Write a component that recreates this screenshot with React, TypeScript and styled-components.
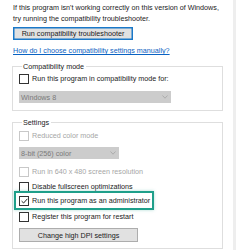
import type { FC, ReactNode } from 'react'
import styled, { createGlobalStyle } from 'styled-components'

const GlobalStyle = createGlobalStyle`
  html, body {
    margin: 0;
    padding: 0;
    background: #ffffff;
  }
  body {
    font-family: "Liberation Sans", Arial, sans-serif;
    font-size: 7.2px;
    color: #1b1b1b;
  }
`

// ─── Layout ────────────────────────────────────────────────────────────────────

const Window = styled.div`
  width: 250px;
  height: 250px;
  overflow: hidden;
  display: flex;
  background: #ffffff;
`

const Page = styled.div`
  width: 233px;
  flex-shrink: 0;
  padding: 2px 0 0 13px;
  box-sizing: border-box;
  display: flex;
  flex-direction: column;
`

const Divider = styled.div`
  width: 3px;
  flex-shrink: 0;
  background: #eeeeee;
`

const Intro = styled.p`
  margin: 0;
  line-height: 11px;
`

const PushButton = styled.button<{ $focused?: boolean; $width: number; $gap: number }>`
  width: ${({ $width }) => $width}px;
  height: ${({ $focused }) => ($focused ? 13 : 14)}px;
  margin-top: ${({ $gap }) => $gap}px;
  padding: 0;
  font-family: inherit;
  font-size: 7.2px;
  color: #1b1b1b;
  background: #e1e1e1;
  border: 1px solid ${({ $focused }) => ($focused ? '#1a78c8' : '#adadad')};
  box-shadow: ${({ $focused }) => ($focused ? 'inset 0 0 0 0.5px #1a78c8' : 'none')};
  border-radius: 0;
  flex-shrink: 0;
`

const HelpLink = styled.a`
  margin-top: 5px;
  line-height: 11px;
  color: #0a62c2;
  text-decoration: underline;
  width: fit-content;
`

const Group = styled.fieldset<{ $top: number; $bottom: number }>`
  margin: ${({ $top }) => $top}px 0 0 -1px;
  width: 211px;
  box-sizing: border-box;
  padding: 0 0 ${({ $bottom }) => $bottom}px 6px;
  border: 1px solid #dedede;
  display: flex;
  flex-direction: column;
  min-width: 0;
`

const Legend = styled.legend`
  margin-left: 3px;
  padding: 0 2px 0 1px;
  line-height: 11px;
  color: #1b1b1b;
`

const Row = styled.label<{ $gap: number; $disabled?: boolean; $highlight?: boolean }>`
  display: flex;
  align-items: center;
  gap: 3px;
  height: 11px;
  margin-top: ${({ $gap }) => $gap}px;
  color: ${({ $disabled }) => ($disabled ? '#a6a6a6' : '#1b1b1b')};
  width: fit-content;
  ${({ $highlight }) =>
    $highlight &&
    `
    margin-left: -3px;
    padding: 2px 2px 2px 3px;
    margin-top: 1px;
    margin-bottom: -2px;
    outline: 2px solid #1f9f8a;
    box-shadow: 0 0 3px 2px rgba(31, 159, 138, 0.35);
  `}
`

const Box = styled.span<{ $disabled?: boolean }>`
  width: 8px;
  height: 8px;
  flex-shrink: 0;
  border: 1px solid ${({ $disabled }) => ($disabled ? '#c8c8c8' : '#333333')};
  background: #ffffff;
  display: flex;
  align-items: center;
  justify-content: center;
`

const Select = styled.div<{ $width: number; $gap: number }>`
  width: ${({ $width }) => $width}px;
  height: 12px;
  margin-top: ${({ $gap }) => $gap}px;
  background: #cccccc;
  color: #7a7a7a;
  display: flex;
  align-items: center;
  justify-content: space-between;
  padding: 0 3px 0 2px;
  box-sizing: border-box;
  flex-shrink: 0;
`

const Chevron = styled.svg`
  width: 6px;
  height: 4px;
`

// ─── Parts ─────────────────────────────────────────────────────────────────────

const Check: FC<{
  label: string
  gap: number
  checked?: boolean
  disabled?: boolean
  highlight?: boolean
}> = ({ label, gap, checked, disabled, highlight }) => (
  <Row $gap={gap} $disabled={disabled} $highlight={highlight}>
    <Box $disabled={disabled}>
      {checked && (
        <svg width="7" height="6" viewBox="0 0 7 6">
          <path d="M0.6 3.1 L2.6 5 L6.4 0.8" fill="none" stroke="#222" strokeWidth="1" />
        </svg>
      )}
    </Box>
    {label}
  </Row>
)

const Dropdown: FC<{ width: number; gap: number; children: ReactNode }> = ({
  width,
  gap,
  children,
}) => (
  <Select $width={width} $gap={gap}>
    <span>{children}</span>
    <Chevron viewBox="0 0 6 4">
      <path d="M0.5 0.5 L3 3.2 L5.5 0.5" fill="none" stroke="#a8a8a8" strokeWidth="0.9" />
    </Chevron>
  </Select>
)

export default function App() {
  return (
    <>
      <GlobalStyle />
      <Window>
        <Page>
          <Intro>
            If this program isn't working correctly on this version of Windows,
            <br />
            try running the compatibility troubleshooter.
          </Intro>
          <PushButton $focused $width={120} $gap={3}>
            Run compatibility troubleshooter
          </PushButton>
          <HelpLink href="#">How do I choose compatibility settings manually?</HelpLink>

          <Group $top={5} $bottom={7}>
            <Legend>Compatibility mode</Legend>
            <Check gap={1} label="Run this program in compatibility mode for:" />
            <Dropdown width={152} gap={7}>
              Windows 8
            </Dropdown>
          </Group>

          <Group $top={6} $bottom={6}>
            <Legend>Settings</Legend>
            <Check gap={2} disabled label="Reduced color mode" />
            <Dropdown width={100} gap={6}>
              8-bit (256) color
            </Dropdown>
            <Check gap={7} disabled label="Run in 640 x 480 screen resolution" />
            <Check gap={4} label="Disable fullscreen optimizations" />
            <Check gap={4} checked highlight label="Run this program as an administrator" />
            <Check gap={5} label="Register this program for restart" />
            <PushButton $width={119} $gap={6}>
              Change high DPI settings
            </PushButton>
          </Group>
        </Page>
        <Divider />
      </Window>
    </>
  )
}
